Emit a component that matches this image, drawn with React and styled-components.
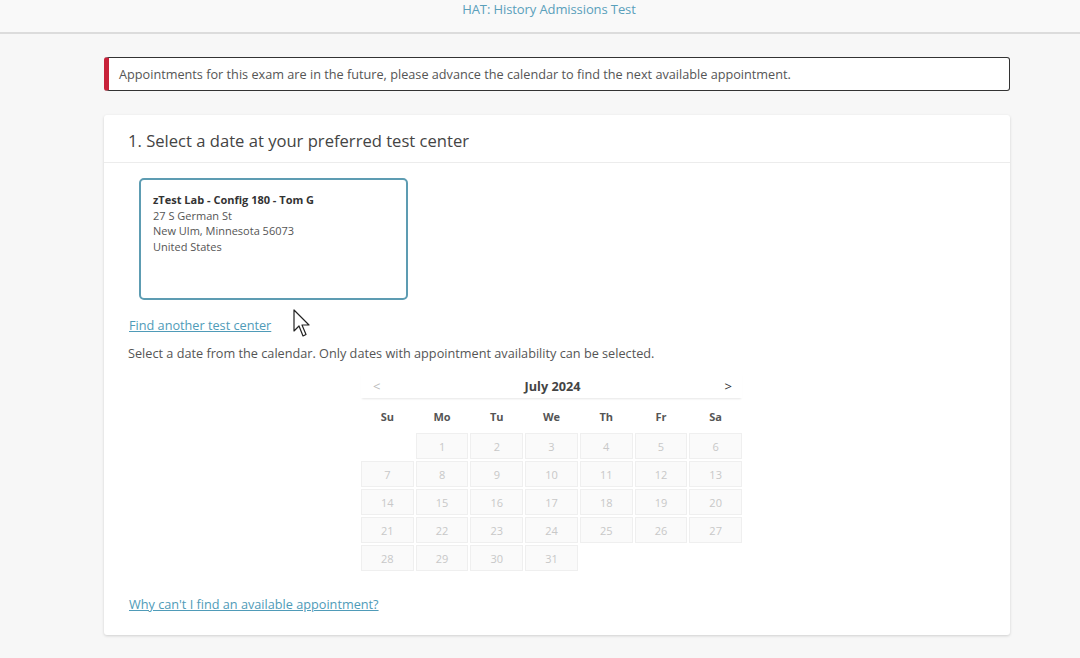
import React from "react";
import styled, { createGlobalStyle } from "styled-components";

const GlobalStyle = createGlobalStyle`
  html, body {
    margin: 0;
    padding: 0;
    background: #f7f7f7;
    font-family: "Open Sans", "Liberation Sans", sans-serif;
    color: #555;
  }
`;

const weeks = [
  [null, 1, 2, 3, 4, 5, 6],
  [7, 8, 9, 10, 11, 12, 13],
  [14, 15, 16, 17, 18, 19, 20],
  [21, 22, 23, 24, 25, 26, 27],
  [28, 29, 30, 31, null, null, null],
];

const dayNames = ["Su", "Mo", "Tu", "We", "Th", "Fr", "Sa"];

export default function App() {
  return (
    <Page>
      <GlobalStyle />
      <TopBar>
        <TopTitle>HAT: History Admissions Test</TopTitle>
      </TopBar>
      <Main>
        <Alert>
          Appointments for this exam are in the future, please advance the
          calendar to find the next available appointment.
        </Alert>
        <Card>
          <CardHeader>1. Select a date at your preferred test center</CardHeader>
          <CardBody>
            <Location>
              <LocName>zTest Lab - Config 180 - Tom G</LocName>
              <LocLine>27 S German St</LocLine>
              <LocLine>New Ulm, Minnesota 56073</LocLine>
              <LocLine>United States</LocLine>
            </Location>
            <LinkRow>
              <TextLink href="#">Find another test center</TextLink>
              <Cursor width="20" height="30" viewBox="0 0 20 30">
                <path
                  d="M1 1 L1 22 L6 17 L10 27 L13 25.5 L9 16 L16 16 Z"
                  fill="#fff"
                  stroke="#222"
                  strokeWidth="1.2"
                  strokeLinejoin="round"
                />
              </Cursor>
            </LinkRow>
            <Hint>
              Select a date from the calendar. Only dates with appointment
              availability can be selected.
            </Hint>
            <Calendar>
              <CalHeader>
                <NavArrow $disabled>&lt;</NavArrow>
                <Month>July 2024</Month>
                <NavArrow>&gt;</NavArrow>
              </CalHeader>
              <Grid>
                {dayNames.map((d) => (
                  <DayName key={d}>{d}</DayName>
                ))}
                {weeks.flat().map((n, i) =>
                  n ? <Cell key={i}>{n}</Cell> : <Empty key={i} />
                )}
              </Grid>
            </Calendar>
            <BottomLink href="#">Why can't I find an available appointment?</BottomLink>
          </CardBody>
        </Card>
      </Main>
    </Page>
  );
}

const Page = styled.div`
  min-height: 658px;
`;

const TopBar = styled.header`
  height: 32px;
  background: #f9f9f9;
  border-bottom: 2px solid #dcdcdc;
  display: flex;
  justify-content: center;
  align-items: flex-start;
  padding-left: 18px;
`;

const TopTitle = styled.div`
  font-size: 13px;
  color: #5aa0bb;
  margin-top: 0;
  letter-spacing: -0.1px;
`;

const Main = styled.main`
  margin: 23px 70px 0 104px;
  display: flex;
  flex-direction: column;
  gap: 24px;
`;

const Alert = styled.div`
  height: 34px;
  box-sizing: border-box;
  border: 1px solid #333;
  border-left: 5px solid #c8223a;
  border-radius: 3px;
  background: #fff;
  font-size: 12.7px;
  color: #555;
  display: flex;
  align-items: center;
  padding-left: 10px;
`;

const Card = styled.section`
  background: #fff;
  border-radius: 3px;
  box-shadow: 0 1px 3px rgba(0, 0, 0, 0.16);
  height: 520px;
  box-sizing: border-box;
  display: flex;
  flex-direction: column;
`;

const CardHeader = styled.h2`
  margin: 0;
  height: 48px;
  box-sizing: border-box;
  border-bottom: 1px solid #ececec;
  display: flex;
  align-items: center;
  padding: 4px 24px 0;
  font-size: 16.6px;
  font-weight: 400;
  color: #444;
`;

const CardBody = styled.div`
  padding: 15px 25px 0;
  display: flex;
  flex-direction: column;
  align-items: flex-start;
`;

const Location = styled.div`
  margin-left: 10px;
  width: 269px;
  height: 122px;
  box-sizing: border-box;
  border: 2px solid #5d9cb2;
  border-radius: 5px;
  padding: 12px 12px;
  font-size: 11px;
  line-height: 15.6px;
  color: #555;
`;

const LocName = styled.div`
  font-weight: 700;
  color: #333;
`;

const LocLine = styled.div``;

const LinkRow = styled.div`
  position: relative;
  margin-top: 13px;
`;

const TextLink = styled.a`
  font-size: 12.7px;
  line-height: 18px;
  color: #4f9bb8;
  text-decoration: underline;
`;

const Cursor = styled.svg`
  position: absolute;
  left: 164px;
  top: -4px;
`;

const Hint = styled.p`
  margin: 9px 0 0 -1px;
  font-size: 12.7px;
  line-height: 18px;
  color: #555;
`;

const Calendar = styled.div`
  margin: 11px 0 0 232px;
  width: 381px;
`;

const CalHeader = styled.div`
  height: 25px;
  display: flex;
  align-items: center;
  justify-content: space-between;
  padding: 0 10px 0 12px;
  box-shadow: 0 2px 2px -1px rgba(0, 0, 0, 0.1);
`;

const NavArrow = styled.span`
  font-size: 13px;
  color: ${(p) => (p.$disabled ? "#bbb" : "#333")};
`;

const Month = styled.span`
  font-size: 12.7px;
  font-weight: 700;
  color: #444;
`;

const Grid = styled.div`
  display: grid;
  grid-template-columns: repeat(7, 1fr);
  grid-auto-rows: 26px;
  gap: 2px 2px;
  margin-top: 7px;
`;

const DayName = styled.div`
  font-size: 11px;
  font-weight: 700;
  color: #555;
  display: flex;
  align-items: center;
  justify-content: center;
  height: 22px;
  margin-bottom: 5px;
`;

const Cell = styled.div`
  border: 1px solid #efefef;
  background: #fafafa;
  font-size: 11px;
  color: #c8c8c8;
  display: flex;
  align-items: center;
  justify-content: center;
`;

const Empty = styled.div``;

const BottomLink = styled(TextLink)`
  margin-top: 24px;
`;
